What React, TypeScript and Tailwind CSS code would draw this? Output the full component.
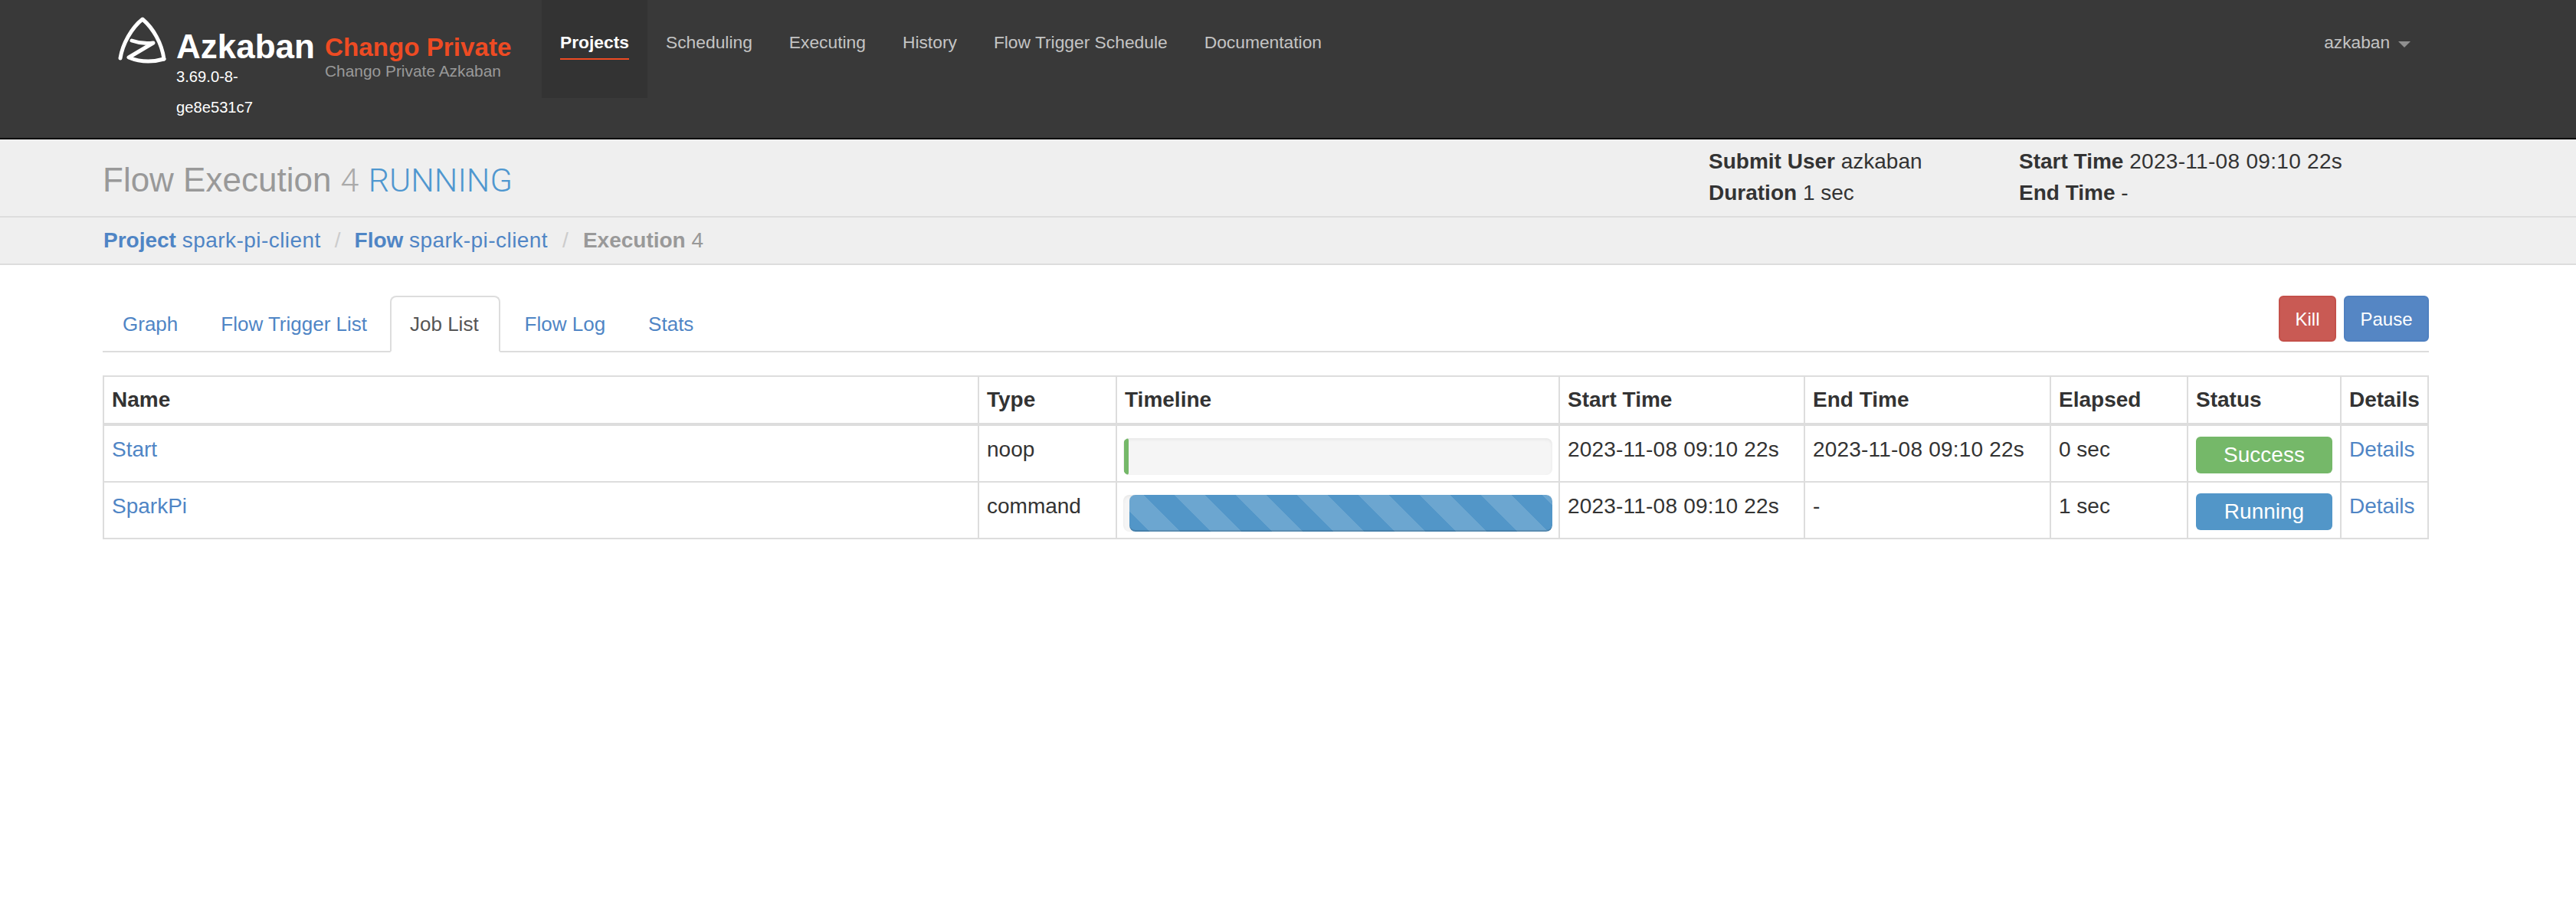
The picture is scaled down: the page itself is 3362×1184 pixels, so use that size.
const navItems = ['Scheduling', 'Executing', 'History', 'Flow Trigger Schedule', 'Documentation']
const tabs = ['Graph', 'Flow Trigger List', 'Job List', 'Flow Log', 'Stats']
const columns = [
  { name: 'Name', width: 'w-[1142px]' },
  { name: 'Type', width: 'w-[180px]' },
  { name: 'Timeline', width: 'w-[578px]' },
  { name: 'Start Time', width: 'w-[320px]' },
  { name: 'End Time', width: 'w-[321px]' },
  { name: 'Elapsed', width: 'w-[179px]' },
  { name: 'Status', width: 'w-[200px]' },
  { name: 'Details', width: 'w-[114px]' },
]
const jobs = [
  { name: 'Start', type: 'noop', end: '2023-11-08 09:10 22s', elapsed: '0 sec', status: 'Success' },
  { name: 'SparkPi', type: 'command', end: '-', elapsed: '1 sec', status: 'Running' },
]

const cell = 'border-2 border-[#dddddd] px-[10px] pt-[11px] align-top'

function Logo() {
  return (
    <svg viewBox="0 0 80 80" className="mt-[15px] h-[80px] w-[80px] shrink-0 blur-[0.4px]" fill="none" stroke="#ffffff" strokeWidth="5" strokeLinecap="round" strokeLinejoin="round">
      <path d="M12 61C15 42 27 21 41 10C55 22 66 41 69 62" />
      <path d="M27 38Q41 43 55 41L23 60Q45 69 69 62" />
    </svg>
  )
}

function TimelineBar({ status }: { status: string }) {
  return (
    <div className="flex h-[48px] w-[560px] overflow-hidden rounded-[8px] bg-[#f5f5f5] shadow-[inset_0_2px_4px_rgba(0,0,0,0.06)]">
      {status === 'Success' ? (
        <div className="ml-px h-full w-[6px] rounded-[3px] bg-[#75b869]" />
      ) : (
        <div className="ml-[8px] h-full flex-1 rounded-[8px] bg-[#5296c8] bg-[linear-gradient(45deg,rgba(255,255,255,.15)_25%,transparent_25%,transparent_50%,rgba(255,255,255,.15)_50%,rgba(255,255,255,.15)_75%,transparent_75%,transparent)] bg-size-[80px_80px] bg-position-[-21px_0] shadow-[inset_0_-2px_0_rgba(0,0,0,0.15)]" />
      )}
    </div>
  )
}

export default function App() {
  return (
    <div className="min-h-screen bg-white font-['Liberation_Sans',Arial,sans-serif] text-[28px] leading-[40px] text-[#333333]">
      {/* top navbar */}
      <header className="flex h-[182px] border-b-2 border-black bg-[#393939] pl-[145px]">
        <Logo />
        <div className="ml-[5px] w-[180px] shrink-0 pt-[39px] text-white">
          <div className="text-[44px] leading-[44px] font-bold">Azkaban</div>
          <div className="-mt-[3px] w-[170px] text-[20.2px] leading-[40px]">3.69.0-8-ge8e531c7</div>
        </div>
        <div className="ml-[14px] w-[283px] shrink-0 pt-[44px]">
          <div className="text-[33.2px] leading-[36px] font-bold text-[#ee4b23]">Chango Private</div>
          <div className="mt-px text-[20.9px] leading-[24px] text-[#999999]">Chango Private Azkaban</div>
        </div>
        <nav className="flex items-start text-[22.8px] leading-[32px]">
          <a className="h-[128px] w-[138px] bg-[#333333] px-[24px] pt-[39px] font-bold whitespace-nowrap text-white">
            <span className="block border-b-2 border-[#ee4b23] pb-[5px]">Projects</span>
          </a>
          {navItems.map((item) => (
            <a key={item} className="px-[24px] pt-[39px] text-[#c4c4c4]">
              {item}
            </a>
          ))}
        </nav>
        <div className="ml-auto mr-[216px] flex items-start gap-[11px] pt-[39px] text-[22.7px] leading-[32px] text-[#c4c4c4]">
          azkaban
          <span className="mt-[15px] border-x-[8px] border-t-[8px] border-x-transparent border-t-[#8f8f8f]" />
        </div>
      </header>

      {/* page header */}
      <div className="flex h-[102px] border-b-2 border-[#dddddd] bg-[#efefef] pl-[134px]">
        <h1 className="w-[2096px] pt-[29px] text-[44px] leading-[48px] font-normal text-[#999999]">
          Flow Execution{' '}
          <span className="font-['Roboto',sans-serif] text-[43px] font-light text-[#aaaaaa]">4</span>{' '}
          <span className="font-['Roboto',sans-serif] text-[43px] font-light text-[#4f97cf]">RUNNING</span>
        </h1>
        <div className="w-[405px] pt-[9px]">
          <div><strong>Submit User</strong> azkaban</div>
          <div className="mt-px"><strong>Duration</strong> 1 sec</div>
        </div>
        <div className="pt-[9px]">
          <div><strong>Start Time</strong> <span className="tracking-[0.3px]">2023-11-08 09:10 22s</span></div>
          <div className="mt-px"><strong>End Time</strong> -</div>
        </div>
      </div>

      {/* breadcrumb */}
      <div className="flex h-[62px] border-b-2 border-[#dddddd] bg-[#efefef] pl-[135px] pt-[10px] text-[#4f85c5]">
        <a><strong>Project</strong> <span className="tracking-[0.45px]">spark-pi-client</span></a>
        <span className="mx-[18px] text-[#cccccc]">/</span>
        <a><strong>Flow</strong> <span className="tracking-[0.45px]">spark-pi-client</span></a>
        <span className="mx-[19px] text-[#cccccc]">/</span>
        <span className="text-[#999999]"><strong>Execution</strong> 4</span>
      </div>

      <main className="ml-[134px] w-[3036px] pt-[40px]">
        {/* tabs and actions */}
        <div className="flex h-[74px] border-b-2 border-[#dddddd] text-[26px]">
          {tabs.map((tab) =>
            tab === 'Job List' ? (
              <a key={tab} className="mr-[6px] h-[74px] rounded-t-[8px] border-2 border-[#dddddd] border-b-white bg-white pl-[24px] pr-[26px] pt-[15px] text-[#555555]">
                {tab}
              </a>
            ) : (
              <a key={tab} className="mr-[4px] h-[72px] border-2 border-transparent px-[24px] pt-[15px] text-[#4f85c5]">
                {tab}
              </a>
            ),
          )}
          <div className="ml-auto flex items-start gap-[10px] text-[24px] text-white">
            <button className="h-[60px] w-[75px] rounded-[6px] border-2 border-[#c4504a] bg-[#c95a54] pt-[2px]">Kill</button>
            <button className="h-[60px] w-[111px] rounded-[6px] border-2 border-[#4f80c0] bg-[#5586c4] pt-[2px]">Pause</button>
          </div>
        </div>

        {/* job table */}
        <table className="mt-[30px] w-[3034px] table-fixed border-collapse">
          <thead>
            <tr>
              {columns.map((col) => (
                <th key={col.name} className={`${col.width} border-2 border-b-4 border-[#dddddd] px-[10px] py-[10px] text-left font-bold`}>
                  {col.name}
                </th>
              ))}
            </tr>
          </thead>
          <tbody>
            {jobs.map((job) => (
              <tr key={job.name}>
                <td className={`${cell} text-[#4f85c5]`}>{job.name}</td>
                <td className={cell}>{job.type}</td>
                <td className="border-2 border-[#dddddd] pb-[8px] pl-[8px] pr-0 pt-[16px] align-top">
                  <TimelineBar status={job.status} />
                </td>
                <td className={`${cell} tracking-[0.2px]`}>2023-11-08 09:10 22s</td>
                <td className={`${cell} tracking-[0.2px]`}>{job.end}</td>
                <td className={cell}>{job.elapsed}</td>
                <td className="border-2 border-[#dddddd] pb-[10px] pl-[10px] pr-0 pt-[14px] align-top">
                  <div className={job.status === 'Success' ? 'flex h-[48px] w-[178px] items-center justify-center rounded-[6px] bg-[#75b869] text-white' : 'flex h-[48px] w-[178px] items-center justify-center rounded-[6px] bg-[#5296c8] text-white'}>
                    {job.status}
                  </div>
                </td>
                <td className={`${cell} text-[#4f85c5]`}>Details</td>
              </tr>
            ))}
          </tbody>
        </table>
      </main>
    </div>
  )
}
